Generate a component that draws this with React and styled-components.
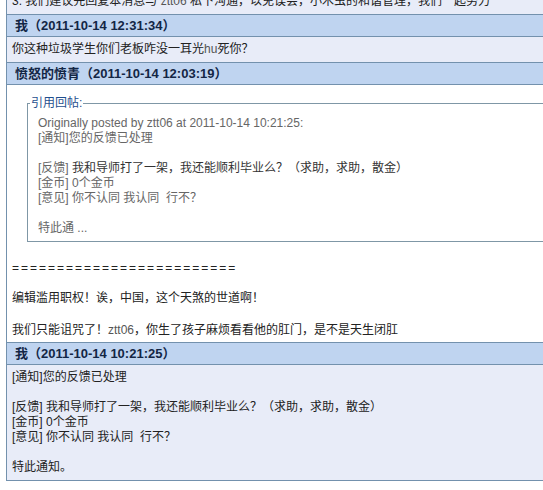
import React from "react";
import styled, { createGlobalStyle } from "styled-components";

const Global = createGlobalStyle`
  html, body { margin: 0; padding: 0; background: #ffffff; overflow: hidden; }
  body {
    font-family: "Liberation Sans", "Noto Sans CJK SC", sans-serif;
    font-size: 12px;
    color: #222;
  }
`;

const Page = styled.div`
  width: 543px;
  height: 490px;
  overflow: hidden;
  padding-left: 6px;
  box-sizing: border-box;
`;

const Board = styled.div`
  width: 600px;
  margin-top: -12px;
  border: 1px solid #7391ad;
  display: flex;
  flex-direction: column;
`;

const Head = styled.div`
  background: #bfd4f0;
  color: #132645;
  font-weight: bold;
  font-size: 13px;
  line-height: 15px;
  padding: 3px 8px;
  border-bottom: 1px solid #7391ad;
  white-space: nowrap;
`;

const Cell = styled.div`
  background: ${(p) => (p.$light ? "#e8ecf8" : "#ffffff")};
  line-height: 15px;
  padding: ${(p) => (p.$single ? "5px 5px" : "5px 5px 4px")};
  border-bottom: ${(p) => (p.$last ? "none" : "1px solid #7391ad")};
  white-space: nowrap;
`;

const Line = styled.div`
  min-height: ${(p) => (p.$tall ? "17px" : "15px")};
  line-height: 15px;
`;

const Soft = styled.span`
  color: #555;
`;

const Rule = styled.span`
  letter-spacing: 2px;
`;

const Quote = styled.fieldset`
  margin: 6px 0 4px 15px;
  padding: 5px 10px 5px;
  border: 1px solid #7f97a6;
  color: #666;
  width: 520px;
  min-width: 0;
`;

const Legend = styled.legend`
  color: #1f4f8e;
  padding: 0 1px;
  margin-left: -8px;
  line-height: 15px;
`;

const Dark = styled.span`
  color: #333;
`;

const Notice = ({ closing, quoted }) => (
  <>
    <Line>[通知]您的反馈已处理</Line>
    <Line />
    <Line>
      [反馈] {quoted ? <Dark>我和导师打了一架，我还能顺利毕业么？（求助，求助，散金）</Dark> : "我和导师打了一架，我还能顺利毕业么？（求助，求助，散金）"}
    </Line>
    <Line>[金币] 0个金币</Line>
    <Line>[意见] 你不认同 我认同&nbsp; 行不？</Line>
    <Line />
    <Line>{closing}</Line>
  </>
);

export default function App() {
  return (
    <Page>
      <Global />
      <Board>
        <Cell $light $single>
          3. 我们建议先回复本消息与 <Soft>ztt06</Soft> 私下沟通，以免误会，小木虫的和谐管理，我们一起努力
        </Cell>
        <Head>我（2011-10-14 12:31:34）</Head>
        <Cell $light $single>
          你这种垃圾学生你们老板咋没一耳光<Soft>hu</Soft>死你？
        </Cell>
        <Head>愤怒的愤青（2011-10-14 12:03:19）</Head>
        <Cell>
          <Quote>
            <Legend>引用回帖:</Legend>
            <Line>Originally posted by ztt06 at 2011-10-14 10:21:25:</Line>
            <Notice closing="特此通 ..." quoted />
          </Quote>
          <Line />
          <Line>
            <Rule>=========================</Rule>
          </Line>
          <Line />
          <Line>编辑滥用职权！诶，中国，这个天煞的世道啊！</Line>
          <Line $tall />
          <Line>
            我们只能诅咒了！<Soft>ztt06</Soft>，你生了孩子麻烦看看他的肛门，是不是天生闭肛
          </Line>
        </Cell>
        <Head>我（2011-10-14 10:21:25）</Head>
        <Cell $light $single $last>
          <Notice closing="特此通知。" />
        </Cell>
      </Board>
    </Page>
  );
}
